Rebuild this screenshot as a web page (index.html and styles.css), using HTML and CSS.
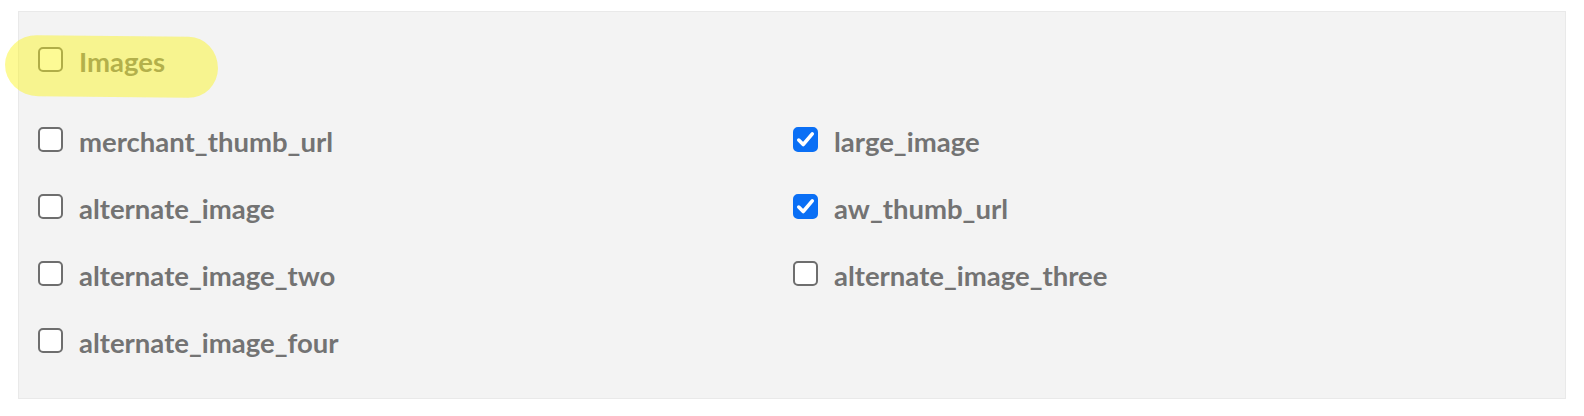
FILE: index.html
```html
<!DOCTYPE html>
<html lang="en">
<head>
<meta charset="UTF-8">
<meta name="viewport" content="width=device-width, initial-scale=1.0">
<title>Field groups - Images</title>
<link rel="stylesheet" href="styles.css">
</head>
<body>

<div class="field-group">
  <div class="marker"></div>
  <label class="field group-title">
    <span class="box"></span>
    <span class="name">Images</span>
  </label>

  <div class="field-list">
    <label class="field">
      <span class="box"></span>
      <span class="name">merchant_thumb_url</span>
    </label>
    <label class="field">
      <span class="box checked">
        <svg viewBox="0 0 24 24"><path d="M5.5 12.5l4.3 4.3 8.7-10.3"/></svg>
      </span>
      <span class="name">large_image</span>
    </label>
    <label class="field">
      <span class="box"></span>
      <span class="name">alternate_image</span>
    </label>
    <label class="field">
      <span class="box checked">
        <svg viewBox="0 0 24 24"><path d="M5.5 12.5l4.3 4.3 8.7-10.3"/></svg>
      </span>
      <span class="name">aw_thumb_url</span>
    </label>
    <label class="field">
      <span class="box"></span>
      <span class="name">alternate_image_two</span>
    </label>
    <label class="field">
      <span class="box"></span>
      <span class="name">alternate_image_three</span>
    </label>
    <label class="field">
      <span class="box"></span>
      <span class="name">alternate_image_four</span>
    </label>
  </div>
</div>

</body>
</html>
```

FILE: styles.css
```css
/* field group panel */
body {
  margin: 0;
  background: #fff;
  font-family: Lato, "Open Sans", sans-serif;
}

.field-group {
  position: relative;
  box-sizing: border-box;
  width: 1548px;
  height: 388px;
  margin: 11px 0 0 18px;
  padding: 35px 18px 0 19px;
  background: #f3f3f3;
  border: 1px solid #e9e9e9;
}

.field {
  display: flex;
  align-items: center;
  gap: 16px;
  height: 25px;
}

.group-title {
  margin-bottom: 55px;
}

.field-list {
  display: grid;
  grid-template-columns: 755px 1fr;
  row-gap: 42px;
}

.box {
  box-sizing: border-box;
  flex: none;
  display: flex;
  width: 25px;
  height: 25px;
  background: #fff;
  border: 2px solid #6e6e6e;
  border-radius: 5px;
}

.box.checked {
  background: #0a6ff5;
  border-color: #0a6ff5;
}

.box svg {
  margin: -2px;
  width: 25px;
  height: 25px;
  fill: none;
  stroke: #fff;
  stroke-width: 3.4;
  stroke-linecap: round;
  stroke-linejoin: round;
}

.name {
  margin-top: 4px;
  font-size: 27.5px;
  font-weight: 700;
  color: #737373;
  white-space: nowrap;
}

/* yellow marker stroke over the group title */
.marker {
  position: absolute;
  left: -14px;
  top: 24px;
  width: 213px;
  height: 61px;
  background: rgba(250, 245, 30, 0.47);
  border-radius: 32px 30px 30px 34px / 30px 32px 30px 32px;
  transform: rotate(0.6deg);
  z-index: 1;
}
```
